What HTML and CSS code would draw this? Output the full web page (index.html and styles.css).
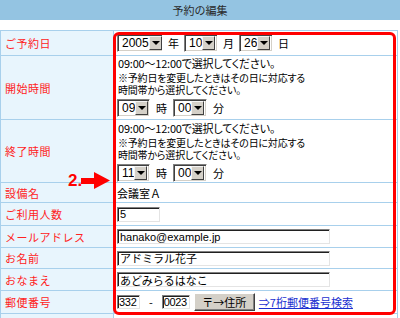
FILE: index.html
```html
<!DOCTYPE html>
<html lang="ja">
<head>
  <meta charset="UTF-8" />
  <meta name="viewport" content="width=device-width, initial-scale=1.0" />
  <title>予約の編集</title>
  <link rel="stylesheet" href="styles.css">
</head>
<body>

  <div class="page">
    <div class="title">予約の編集</div>

    <div class="form">
      <div class="row h-date">
        <div class="label">ご予約日</div>
        <div class="value inline">
          <span class="sel w-year">2005<i></i></span><span>年</span>
          <span class="sel w-2">10<i></i></span><span>月</span>
          <span class="sel w-2">26<i></i></span><span>日</span>
        </div>
      </div>

      <div class="row h-start">
        <div class="label">開始時間</div>
        <div class="value">
          <div class="lead">09:00～12:00で選択してください。</div>
          <div class="note first">※予約日を変更したときはその日に対応する</div>
          <div class="note">時間帯から選択してください。</div>
          <div class="inline time">
            <span class="sel w-h">09<i></i></span><span>時</span>
            <span class="sel w-m">00<i></i></span><span>分</span>
          </div>
        </div>
      </div>

      <div class="row h-end">
        <div class="label">終了時間</div>
        <div class="value">
          <div class="lead">09:00～12:00で選択してください。</div>
          <div class="note first">※予約日を変更したときはその日に対応する</div>
          <div class="note">時間帯から選択してください。</div>
          <div class="inline time">
            <span class="sel w-h">11<i></i></span><span>時</span>
            <span class="sel w-m">00<i></i></span><span>分</span>
          </div>
        </div>
      </div>

      <div class="row h-room">
        <div class="label">設備名</div>
        <div class="value inline">会議室Ａ</div>
      </div>

      <div class="row h-people">
        <div class="label">ご利用人数</div>
        <div class="value inline"><input class="field w-num" value="5"></div>
      </div>

      <div class="row h-mail">
        <div class="label">メールアドレス</div>
        <div class="value inline"><input class="field w-long" value="hanako@example.jp"></div>
      </div>

      <div class="row h-name">
        <div class="label">お名前</div>
        <div class="value inline"><input class="field w-long" value="アドミラル花子"></div>
      </div>

      <div class="row h-kana">
        <div class="label">おなまえ</div>
        <div class="value inline"><input class="field w-long" value="あどみらるはなこ"></div>
      </div>

      <div class="row h-zip">
        <div class="label">郵便番号</div>
        <div class="value inline zip">
          <input class="field w-zip3" value="332">
          <span class="dash">-</span>
          <input class="field w-zip4" value="0023">
          <button class="btn">〒→住所</button>
          <a class="link" href="#">⇒7桁郵便番号検索</a>
        </div>
      </div>

      <div class="row h-more">
        <div class="label"></div>
        <div class="value"></div>
      </div>
    </div>

    <!-- annotation over the screenshot -->
    <div class="highlight"></div>
    <div class="callout">
      <span class="num">2.</span>
      <svg width="30" height="18" viewBox="0 0 30 18">
        <polygon points="0,6 13,6 13,0 29,8.5 13,17 13,12 0,12" fill="#f00"/>
      </svg>
    </div>
  </div>

</body>
</html>
```

FILE: styles.css
```css
* { box-sizing: border-box; }
body { margin: 0; background: #fff; font-family: "Noto Sans CJK JP", "Liberation Sans", sans-serif; font-size: 11px; color: #000; }
.page { position: relative; width: 400px; height: 318px; overflow: hidden; }

.title { height: 20px; line-height: 20px; background: #94c4e2; text-align: center; font-size: 11px; color: #2a2a2a; margin-bottom: 10px; }

.form { width: 398px; border: 1px solid #a8d0ec; border-bottom: none; }
.row { display: grid; grid-template-columns: 113px 1fr; border-bottom: 1px solid #a8d0ec; }
.label { background: #e8f5fd; border-right: 1px solid #a8d0ec; color: #f22; padding-left: 4px; display: flex; align-items: center; letter-spacing: 0.5px; }
.value { padding-left: 3px; }
.inline { display: flex; align-items: center; gap: 5px; }

.h-date { height: 25px; }
.h-start { height: 64px; }
.h-end { height: 63px; }
.h-room { height: 20px; }
.h-people { height: 23px; }
.h-mail { height: 22px; }
.h-name { height: 21px; }
.h-kana { height: 22px; }
.h-zip { height: 23px; }
.h-more { height: 30px; }

.lead { line-height: 15px; padding-left: 1px; font-feature-settings: "palt"; letter-spacing: -0.2px; }
.note { font-size: 10px; line-height: 12px; height: 12px; padding-left: 1px; font-feature-settings: "palt"; letter-spacing: -0.2px; }
.note.first { margin-top: 1px; }
.time { margin-top: 3px; gap: 6px; }
.h-end .lead { margin-top: 1px; }

/* windows-classic style dropdowns */
.sel { display: inline-flex; align-items: center; height: 18px; background: #fff; border: 1px solid; border-color: #808080 #fff #fff #808080; box-shadow: inset 1px 1px 0 #404040, inset -1px -1px 0 #d4d0c8; padding: 0 2px 0 4px; font-family: "Liberation Sans", sans-serif; font-size: 12px; }
.sel i { flex-shrink: 0; margin-left: auto; width: 13px; height: 14px; background: #d4d0c8; border: 1px solid; border-color: #f4f4f4 #404040 #404040 #f4f4f4; position: relative; }
.sel i::after { content: ""; position: absolute; left: 2px; top: 4px; border-left: 4px solid transparent; border-right: 4px solid transparent; border-top: 4px solid #000; }
.w-year { width: 46px; }
.w-2 { width: 34px; }
.w-h { width: 33px; }
.w-m { width: 34px; }

.field { height: 15px; border: 1px solid; border-color: #808080 #e4e4e4 #e4e4e4 #808080; box-shadow: inset 1px 1px 0 #202020; padding: 0 2px; font-family: "Liberation Sans", "Noto Sans CJK JP", sans-serif; font-size: 11px; margin: 0; background: #fff; }
.w-num { width: 43px; }
.w-long { width: 213px; }
.w-zip3 { width: 23px; height: 14px; padding: 0 1px; letter-spacing: -0.3px; }
.w-zip4 { width: 28px; height: 14px; padding: 0 1px; letter-spacing: -0.4px; }
.zip { gap: 4px; }
.dash { margin: 0 5px; }
.btn { height: 18px; width: 61px; padding: 0; background: #d4d0c8; border: 1px solid; border-color: #fff #404040 #404040 #fff; box-shadow: inset -1px -1px 0 #808080; font-family: "Noto Sans CJK JP", sans-serif; font-size: 11px; color: #000; }
.link { color: #1a2fd0; text-decoration: underline; font-size: 11px; }

.highlight { position: absolute; left: 113px; top: 32px; width: 283px; height: 283px; border: 3px solid #f00; border-radius: 6px; }
.callout { position: absolute; left: 68px; top: 172px; display: flex; align-items: center; gap: 0; }
.callout .num { color: #f00; font-family: "Liberation Sans", sans-serif; font-weight: bold; font-size: 17px; line-height: 18px; }
.callout svg { display: block; margin-left: -1px; }
```
